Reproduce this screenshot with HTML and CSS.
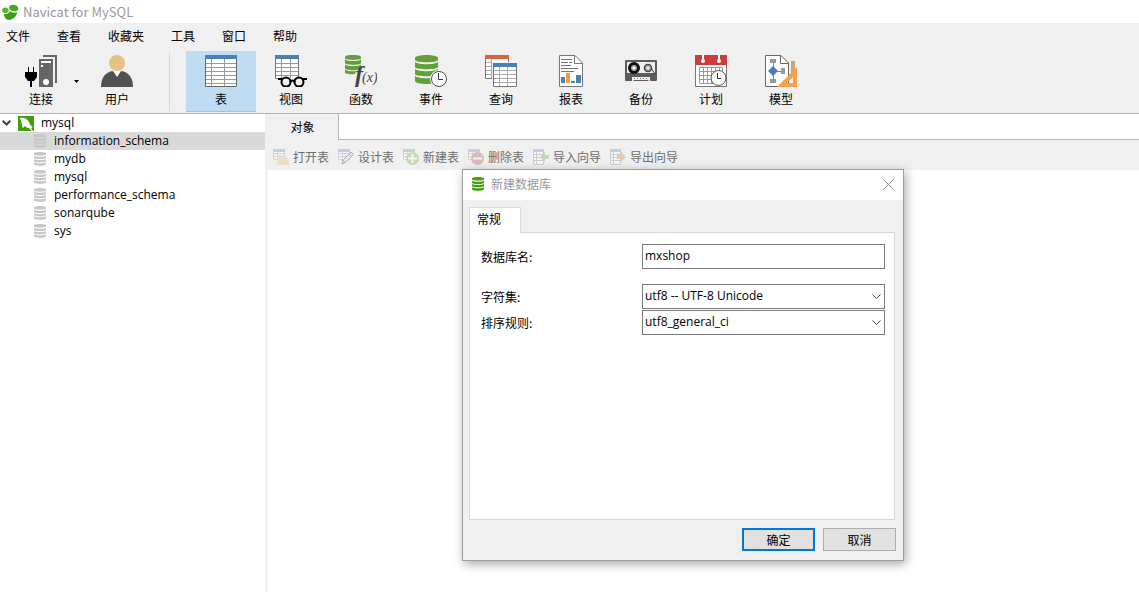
FILE: index.html
```html
<!DOCTYPE html>
<html lang="zh-CN">
<head>
    <meta charset="UTF-8">
    <meta name="viewport" content="width=device-width, initial-scale=1.0">
    <title>Navicat for MySQL</title>
    <link rel="stylesheet" href="styles.css">
</head>
<body>
    <!-- shared symbols -->
    <svg class="symbols" aria-hidden="true">
        <symbol id="db" viewBox="0 0 12 14">
            <path d="M0 1.500C0-.5 12-.5 12 1.500V2.500C12 4 0 4 0 2.500Z"/>
            <path d="M0 3.700C2 5 10 5 12 3.700V5.700C12 7.500 0 7.500 0 5.700Z"/>
            <path d="M0 7C2 8.400 10 8.400 12 7V9C12 10.800 0 10.800 0 9Z"/>
            <path d="M0 10.300C2 11.700 10 11.700 12 10.300V12.300C12 14.400 0 14.400 0 12.300Z"/>
        </symbol>
        <symbol id="grid" viewBox="0 0 12 12">
            <path fill="#fff" stroke="#aaa" d="M.5 .5H11.500V10.500H.5ZM.5 4.500H11.500M.5 7.500H11.500M4.500 3V10.500"/>
            <path fill="#7f9ccc" d="M0 0H12V3H0Z"/>
        </symbol>
        <symbol id="tall-grid" viewBox="0 0 11 16">
            <path fill="#fff" stroke="#999" d="M.5 .5H10.500V15.500H.5ZM.5 5.500H10.500M.5 8.500H10.500M.5 11.500H10.500M3.500 3V15.500"/>
            <path fill="#7f9ccc" d="M0 0H11V3H0Z"/>
        </symbol>
    </svg>

    <header class="titlebar">
        <svg width="18" height="18" viewBox="0 0 18 18">
            <path fill="#3f9e1c" d="M3 11C6 11.500 8 10 9 8C11 10 14 10 16 9C16 13 12 17 8 17C5 17 3 14 3 11Z"/>
            <path fill="#56b52c" d="M1 7C1 5 4 4 6 5C9 6 8 10 5 10C2 10.500 1 9 1 7Z"/>
            <path fill="#4aa822" d="M8 5C8 2 11 1 13 2C16 2 18 4 17 7C15 9 9 9 8 5Z"/>
        </svg>
        <span>Navicat for MySQL</span>
    </header>

    <nav class="menu">
        <a href="#">文件</a>
        <a href="#">查看</a>
        <a href="#">收藏夹</a>
        <a href="#">工具</a>
        <a href="#">窗口</a>
        <a href="#">帮助</a>
    </nav>

    <div class="toolbar">
        <button class="tool connect">
            <svg width="32" height="32" viewBox="0 0 32 32">
                <path fill="#666" d="M18 0H32V28H30V2H18ZM14 4H28V32H14Z"/>
                <path fill="#fff" d="M16 6H26V8H16ZM16 10H18V12H16Z"/>
                <circle cx="21" cy="27" r="3" fill="#fff"/>
                <path fill="#000" d="M3 12H4V17H8V12H9V17H12V22L9 26H7V32H5V26H3L0 22V17H3Z"/>
            </svg>
            <span>连接</span>
        </button>
        <button class="drop" aria-label="更多连接"><svg width="5" height="3" viewBox="0 0 5 3"><path d="M0 0H5L2.500 3Z"/></svg></button>
        <button class="tool">
            <svg width="32" height="32" viewBox="0 0 32 32">
                <path fill="#525252" d="M0 32C0 23 4 17 12 16H20C28 17 32 23 32 32Z"/>
                <path fill="#fff" d="M12 16H20L16 22Z"/>
                <circle cx="16" cy="8" r="8" fill="#e5c383"/>
            </svg>
            <span>用户</span>
        </button>
        <div class="separator"></div>
        <button class="tool active">
            <svg width="32" height="32" viewBox="0 0 32 32">
                <path fill="#fff" stroke="#666" d="M.5 .5H31.500V31.500H.5Z"/>
                <path fill="none" stroke="#999" d="M1 8.500H31M1 12.500H31M1 16.500H31M1 20.500H31M1 24.500H31M1 28.500H31M6.500 4V31M19.500 4V31"/>
                <path fill="#4a7fba" d="M0 0H32V4H0Z"/>
            </svg>
            <span>表</span>
        </button>
        <button class="tool">
            <svg width="32" height="32" viewBox="0 0 32 32">
                <path fill="#fff" stroke="#777" d="M.5 .5H23.500V23.500H.5Z"/>
                <path fill="none" stroke="#999" d="M1 8.500H23M1 12.500H23M1 16.500H23M1 20.500H23M6.500 4V23M15.500 4V23"/>
                <path fill="#4a7fba" d="M0 0H24V4H0Z"/>
                <path stroke="#efefef" stroke-width="4" fill="none" d="M3 25H32"/>
                <g fill="#efefef" stroke="#000" stroke-width="2"><circle cx="11" cy="27" r="4.500"/><circle cx="24" cy="27" r="4.500"/></g>
                <path fill="none" stroke="#000" stroke-width="2" d="M3 24H7M15 27Q17.500 24 20 27M28 24H32"/>
            </svg>
            <span>视图</span>
        </button>
        <button class="tool">
            <svg width="32" height="32" viewBox="0 0 32 32">
                <g fill="#62a03a">
                    <path d="M0 2C0-.7 16-.7 16 2V3C16 5.500 0 5.500 0 3Z"/>
                    <path d="M0 4.500C3 6.500 13 6.500 16 4.500V8C16 10.500 0 10.500 0 8Z"/>
                    <path d="M0 9.500C3 11.500 13 11.500 16 9.500V13L12 15C6 15.500 0 15 0 13Z"/>
                    <path d="M0 14.500C3 16.500 8 16.500 11 16L10 19C5 19.500 0 19 0 17.500Z"/>
                </g>
                <text x="10" y="27" class="fn-big">f</text>
                <text x="17" y="27" class="fn-small">(x)</text>
            </svg>
            <span>函数</span>
        </button>
        <button class="tool">
            <svg width="32" height="32" viewBox="0 0 32 32">
                <g fill="#62a03a">
                    <path d="M0 3C0-1 23-1 23 3V5C23 8 0 8 0 5Z"/>
                    <path d="M0 7C4 10 19 10 23 7V12C23 15 0 15 0 12Z"/>
                    <path d="M0 14C4 17 19 17 23 14V19C23 22 0 22 0 19Z"/>
                    <path d="M0 21C4 24 19 24 23 21V26C23 30 0 30 0 26Z"/>
                </g>
                <circle cx="24" cy="24" r="9" fill="#efefef"/>
                <circle cx="24" cy="24" r="7.500" fill="#fff" stroke="#4d4d4d"/>
                <path fill="none" stroke="#333" d="M23.500 18V24.500H28"/>
            </svg>
            <span>事件</span>
        </button>
        <button class="tool">
            <svg width="32" height="32" viewBox="0 0 32 32">
                <path fill="#fff" stroke="#777" d="M.5 .5H23.500V23.500H.5Z"/>
                <path fill="none" stroke="#aaa" d="M1 7.500H23M1 11.500H23M1 15.500H23M1 19.500H23M6.500 4V23"/>
                <path fill="#dc6244" d="M0 0H24V4H0Z"/>
                <path fill="#efefef" d="M7 7H32V32H7Z"/>
                <path fill="#fff" stroke="#777" d="M8.500 8.500H31.500V31.500H8.500Z"/>
                <path fill="none" stroke="#aaa" d="M9 15.500H31M9 19.500H31M9 23.500H31M9 27.500H31M14.500 12V31M22.500 12V31"/>
                <path fill="#4a7fba" d="M8 8H32V12H8Z"/>
            </svg>
            <span>查询</span>
        </button>
        <button class="tool">
            <svg width="24" height="32" viewBox="0 0 24 32">
                <path fill="#fff" stroke="#777" d="M.5 .5H16L23.500 8V31.500H.5Z"/>
                <path fill="none" stroke="#777" d="M15.500 .5V8.500H23.500M2 4.500H13M2 7.500H9M10 7.500H13M2 10.500H12M2 13.500H19M2 16.500H15"/>
                <path fill="#4a7fba" d="M2 22H6V28H2ZM12 26H16V28H12ZM17 20H22V28H17Z"/>
                <path fill="#f59b42" d="M7 18H11V28H7Z"/>
            </svg>
            <span>报表</span>
        </button>
        <button class="tool">
            <svg width="32" height="32" viewBox="0 0 32 32">
                <rect y="5" width="32" height="21" rx="1" fill="#5c5c5c"/>
                <path fill="#efefef" d="M2 7H30V18H2Z"/>
                <path fill="#efefef" d="M7 22H25V26H24L23 25H9L8 26H7Z"/>
                <path fill="none" stroke="#777" stroke-dasharray="1 2" d="M9 23.500H24"/>
                <circle cx="9" cy="13" r="4.500" fill="#aaa" stroke="#111" stroke-width="3"/>
                <circle cx="23" cy="13" r="3.500" fill="#bbb" stroke="#444" stroke-width="1.500"/>
                <path stroke="#333" d="M26 13L30 19"/>
                <circle cx="9" cy="13" r="1.500" fill="#fff"/>
                <circle cx="23" cy="13" r="1" fill="#fff"/>
            </svg>
            <span>备份</span>
        </button>
        <button class="tool">
            <svg width="32" height="32" viewBox="0 0 32 32">
                <path fill="#fff" stroke="#777" d="M.5 .5H31.500V31.500H.5Z"/>
                <path fill="#d03c3c" d="M0 0H32V10H0Z"/>
                <path fill="#fff" d="M7 0H9V5H7ZM23 0H25V5H23Z"/>
                <circle cx="8" cy="6" r="2" fill="#fff"/><circle cx="24" cy="6" r="2" fill="#fff"/>
                <path fill="none" stroke="#999" d="M4.500 12.500H27.500V28.500H4.500ZM4.500 16.500H27M4.500 20.500H27M4.500 24.500H27M8.500 12V28M12.500 12V28M16.500 12V28M20.500 12V28M24.500 12V28"/>
                <circle cx="23.500" cy="23" r="7.500" fill="#fff" stroke="#555"/>
                <path fill="none" stroke="#333" d="M22.500 18V23.500H26"/>
            </svg>
            <span>计划</span>
        </button>
        <button class="tool">
            <svg width="32" height="32" viewBox="0 0 32 32">
                <path fill="#fff" stroke="#666" d="M.5 .5H16L23.500 8V31.500H.5Z"/>
                <path fill="none" stroke="#666" d="M15.500 .5V8.500H23.500"/>
                <path fill="none" stroke="#888" d="M8.500 6V26M8 16.500H18"/>
                <path fill="#999" d="M5 4H11V8H5ZM16 13H20V19H16ZM5 24H11V28H5Z"/>
                <path fill="#4a7fba" d="M8 11L13 16L8 21L3 16Z"/>
                <path fill="#cda372" d="M26 6H30V18L26 20Z"/>
                <path fill="#f6a04b" fill-rule="evenodd" d="M32 12V32H12ZM28 22V28H22Z"/>
            </svg>
            <span>模型</span>
        </button>
    </div>

    <main class="main">
        <aside class="tree">
            <div class="row root">
                <svg width="9" height="6" viewBox="0 0 9 6"><path fill="none" stroke="#404040" stroke-width="2" d="M.7 .7L4.500 4.500L8.300 .7"/></svg>
                <svg width="16" height="15" viewBox="0 0 16 15">
                    <path fill="#3fa009" d="M0 0H16V15H0Z"/>
                    <path fill="#fff" d="M2 2C5 1 9 2 11 6C12 9 13 10 15 11L13 12L15 15H14L11 12C9 12 8 11 7 10L5 12L4 10C4 7 3 5 2 2Z"/>
                </svg>
                <span>mysql</span>
            </div>
            <div class="row selected"><svg width="12" height="14"><use href="#db"/></svg><span>information_schema</span></div>
            <div class="row"><svg width="12" height="14"><use href="#db"/></svg><span>mydb</span></div>
            <div class="row"><svg width="12" height="14"><use href="#db"/></svg><span>mysql</span></div>
            <div class="row"><svg width="12" height="14"><use href="#db"/></svg><span>performance_schema</span></div>
            <div class="row"><svg width="12" height="14"><use href="#db"/></svg><span>sonarqube</span></div>
            <div class="row"><svg width="12" height="14"><use href="#db"/></svg><span>sys</span></div>
        </aside>

        <section class="workspace">
            <div class="tabs">
                <button class="tab">对象</button>
                <div class="tab-space"></div>
            </div>
            <div class="actions">
                <button disabled>
                    <svg width="16" height="16" viewBox="0 0 16 16"><use href="#grid" width="12" height="12"/><path fill="#e8c88c" d="M4 6H9L10 8H14V10H16V16H4Z"/></svg>
                    <span>打开表</span>
                </button>
                <button disabled>
                    <svg width="16" height="16" viewBox="0 0 16 16"><use href="#grid" width="12" height="12"/><path fill="#ddd" stroke="#555" d="M4 15L5 11L13 3L15.500 5.500L7.500 13.500ZM11 5L13.500 7.500M5 11L7.500 13.500"/></svg>
                    <span>设计表</span>
                </button>
                <button disabled>
                    <svg width="16" height="16" viewBox="0 0 16 16"><use href="#grid" width="12" height="12"/><circle cx="9.500" cy="9.500" r="6.500" fill="#85b84a"/><path fill="#fff" d="M8.500 5H10.500V8.500H14V10.500H10.500V14H8.500V10.500H5V8.500H8.500Z"/></svg>
                    <span>新建表</span>
                </button>
                <button disabled>
                    <svg width="16" height="16" viewBox="0 0 16 16"><use href="#grid" width="12" height="12"/><circle cx="9.500" cy="9.500" r="6.500" fill="#c46565"/><path fill="#fff" d="M5 8.500H14V10.500H5Z"/></svg>
                    <span>删除表</span>
                </button>
                <button disabled>
                    <svg width="16" height="16" viewBox="0 0 16 16"><use href="#tall-grid" width="11" height="16"/><path fill="#86b45c" d="M7 8L12 3V6H16V10H12V13Z"/></svg>
                    <span>导入向导</span>
                </button>
                <button disabled>
                    <svg width="16" height="16" viewBox="0 0 16 16"><use href="#tall-grid" width="11" height="16"/><path fill="#e39348" d="M16 8L11 3V6H7V10H11V13Z"/></svg>
                    <span>导出向导</span>
                </button>
            </div>

            <form class="dialog" role="dialog" aria-labelledby="dialog-title">
                <div class="dialog-title">
                    <svg width="12" height="14"><use href="#db"/></svg>
                    <span id="dialog-title">新建数据库</span>
                    <button type="button" class="close" aria-label="关闭"><svg width="11" height="11" viewBox="0 0 11 11"><path stroke="#888" d="M.5 .5L10.500 10.500M10.500 .5L.5 10.500"/></svg></button>
                </div>
                <div class="dialog-body">
                    <button type="button" class="dialog-tab">常规</button>
                    <div class="panel">
                        <div class="field name">
                            <label for="db-name">数据库名:</label>
                            <input id="db-name" type="text" value="mxshop">
                        </div>
                        <div class="field">
                            <label for="charset">字符集:</label>
                            <div class="select">
                                <select id="charset"><option>utf8 -- UTF-8 Unicode</option></select>
                                <svg width="9" height="6" viewBox="0 0 9 6"><path fill="none" stroke="#444" d="M.5 .5L4.500 4.500L8.500 .5"/></svg>
                            </div>
                        </div>
                        <div class="field">
                            <label for="collation">排序规则:</label>
                            <div class="select">
                                <select id="collation"><option>utf8_general_ci</option></select>
                                <svg width="9" height="6" viewBox="0 0 9 6"><path fill="none" stroke="#444" d="M.5 .5L4.500 4.500L8.500 .5"/></svg>
                            </div>
                        </div>
                    </div>
                    <div class="buttons">
                        <button type="button" class="btn ok">确定</button>
                        <button type="button" class="btn">取消</button>
                    </div>
                </div>
            </form>
        </section>
    </main>
</body>
</html>
```
FILE: styles.css
```css
* { box-sizing: border-box; }
body { display: flex; flex-direction: column; min-height: 100vh; margin: 0; background: #fff; color: #000; font: 12px/18px "Noto Sans CJK SC", sans-serif; }
button { padding: 0; border: none; background: none; color: inherit; font: inherit; }
svg { display: block; flex: none; }
.symbols { position: absolute; width: 0; height: 0; }

.titlebar { display: flex; align-items: center; gap: 4px; height: 23px; padding-left: 1px; color: #999; font-size: 13px; }
.menu { display: flex; gap: 27px; height: 27px; padding: 4px 6px; background: #f0f0f0; }
.menu a { color: #000; text-decoration: none; }

.toolbar { display: flex; height: 64px; padding: 1px 6px; background: #f0f0f0; border-bottom: 1px solid #b4b4b4; }
.tool { display: flex; flex-direction: column; align-items: center; gap: 3px; width: 70px; height: 61px; padding-top: 4px; }
.tool.active { background: #c0dcf3; border-bottom: 1px solid #90c8f6; }
.drop { display: flex; align-items: center; width: 6px; margin-left: -2px; margin-right: 2px; }
.separator { width: 1px; height: 59px; margin: 1px 16px 0 17px; background: #d9d9d9; }
.fn-big { font: italic bold 24px "Liberation Serif", serif; fill: #444; }
.fn-small { font: italic 14px "Liberation Serif", serif; fill: #444; }

.main { display: flex; flex: 1; }
.tree { width: 268px; border-right: 3px solid #f0f0f0; font: 12px/16px "Open Sans", "Noto Sans CJK SC", sans-serif; }
.row { display: flex; align-items: center; gap: 8px; height: 18px; padding-left: 34px; fill: #c8c8c8; }
.row.root { gap: 7px; padding-left: 2px; }
.row.selected { background: #d9d9d9; }

.workspace { position: relative; flex: 1; }
.tabs { display: flex; height: 26px; margin-left: -3px; }
.tab { width: 73px; padding-left: 2px; background: #f0f0f0; }
.tab-space { flex: 1; border-left: 1px solid #b4b4b4; border-bottom: 1px solid #b4b4b4; }
.actions { display: flex; align-items: center; gap: 9px; height: 30px; padding: 4px 5px 0; background: #f0f0f0; }
.actions button { display: flex; align-items: center; gap: 4px; color: #6d6d6d; }
.actions svg { opacity: 0.4; }

.dialog { position: absolute; left: 194px; top: 55px; width: 442px; border: 1px solid #9c9c9c; background: #f0f0f0; box-shadow: 2px 3px 10px rgba(0,0,0,0.35); }
.dialog-title { display: flex; align-items: center; gap: 7px; height: 30px; padding: 0 9px 2px; background: #fff; color: #999; }
.dialog-title svg { fill: #45a010; }
.close { margin-left: auto; }
.dialog-body { padding: 7px 7px 9px 6px; }
.dialog-tab { display: block; position: relative; z-index: 1; width: 52px; height: 26px; padding: 0 12px 3px 0; border: 1px solid #d9d9d9; border-bottom: none; background: #fff; }
.panel { height: 288px; margin: -1px 1px 8px 0; padding: 11px 9px 11px 11px; border: 1px solid #d9d9d9; background: #fff; }
.field { display: flex; justify-content: space-between; align-items: center; margin-bottom: 1px; }
.field.name { margin-bottom: 15px; }
.field input, .field select { width: 243px; height: 25px; padding: 0 2px 2px; border: 1px solid #7a7a7a; border-radius: 0; background: #fff; color: #000; font: 12px "Open Sans", "Noto Sans CJK SC", sans-serif; appearance: none; }
.select { display: grid; align-items: center; }
.select select, .select svg { grid-area: 1 / 1; }
.select svg { justify-self: end; margin-right: 4px; pointer-events: none; }
.buttons { display: flex; justify-content: flex-end; gap: 8px; }
.btn { width: 73px; height: 23px; border: 1px solid #adadad; background: #e1e1e1; }
.btn.ok { border: 2px solid #0078d7; }
```
